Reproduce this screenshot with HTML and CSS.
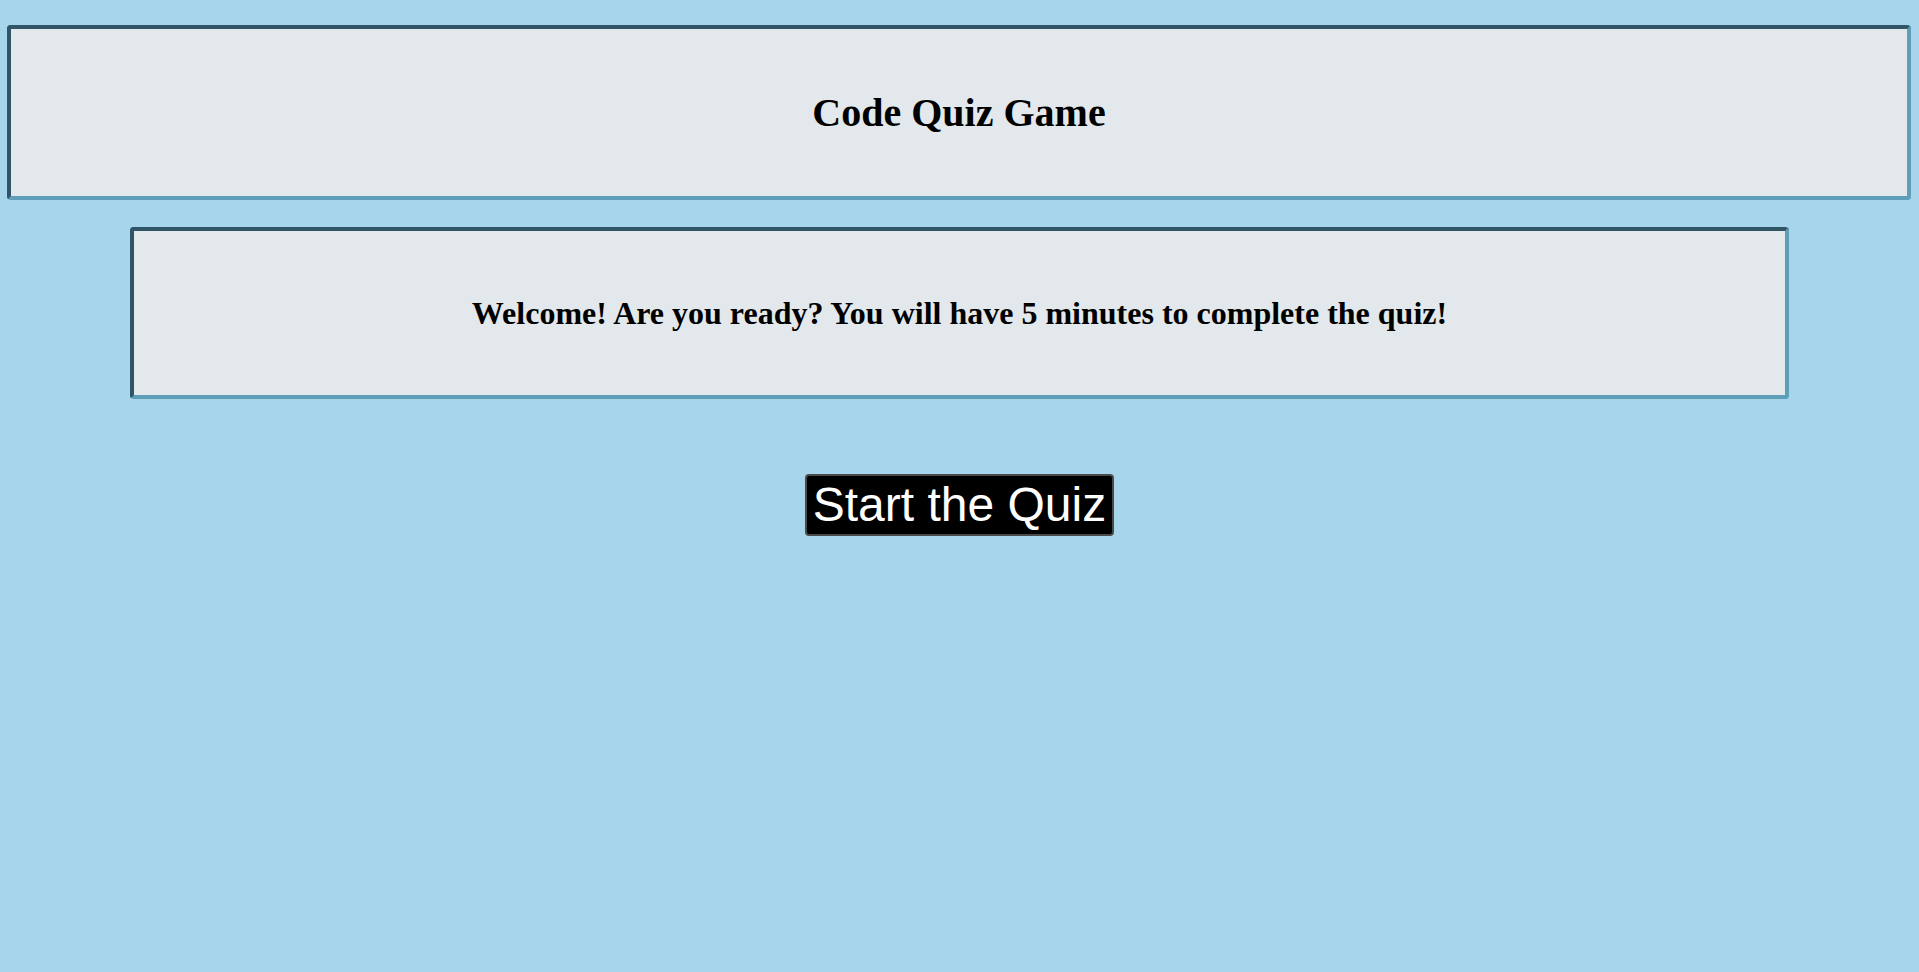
FILE: index.html
```html
<!DOCTYPE html>
<html lang="en">
<head>
<meta charset="utf-8">
<title>Code Quiz Game</title>
<link rel="stylesheet" href="styles.css">
</head>
<body>
  <header class="header">
    <h1 class="title">Code Quiz Game</h1>
  </header>
  <main class="main">
    <section class="intro">
      <h2 class="intro-text">Welcome! Are you ready? You will have 5 minutes to complete the quiz!</h2>
    </section>
    <div class="actions">
      <button class="start-btn" type="button">Start the Quiz</button>
    </div>
  </main>
</body>
</html>
```

FILE: styles.css
```css
html, body {
  margin: 0;
  padding: 0;
}

body {
  background: #a7d5ec;
  font-family: "Liberation Serif", "Times New Roman", serif;
  color: #000;
  padding: 25px 8px 0 7px;
  min-height: 972px;
  box-sizing: border-box;
}

.header,
.intro {
  background: #e2e8eb;
  border: 4px solid;
  border-color: #2f5567 #5f9eb9 #5f9eb9 #2f5567;
  border-radius: 4px;
  display: flex;
  justify-content: center;
  box-sizing: border-box;
}

.header {
  height: 175px;
  align-items: center;
}

.title {
  margin: 0;
  font-size: 40px;
  font-weight: bold;
  line-height: 46px;
  padding-top: 1px;
}

.main {
  display: flex;
  flex-direction: column;
  align-items: center;
}

.intro {
  margin-top: 27px;
  width: 1659px;
  margin-left: 1px;
  height: 172px;
  align-items: center;
}

.intro-text {
  margin: 0;
  font-size: 32px;
  font-weight: bold;
  line-height: 37px;
  padding-top: 1px;
}

.actions {
  margin-top: 75px;
  display: flex;
  justify-content: center;
  margin-left: 1px;
}

.start-btn {
  font-family: "Liberation Sans", Arial, sans-serif;
  font-size: 48px;
  line-height: 54px;
  color: #fff;
  background: #000;
  border: 2px solid #4a4a4a;
  border-radius: 4px;
  padding: 2px 6px 2px 6px;
  cursor: pointer;
}
```
